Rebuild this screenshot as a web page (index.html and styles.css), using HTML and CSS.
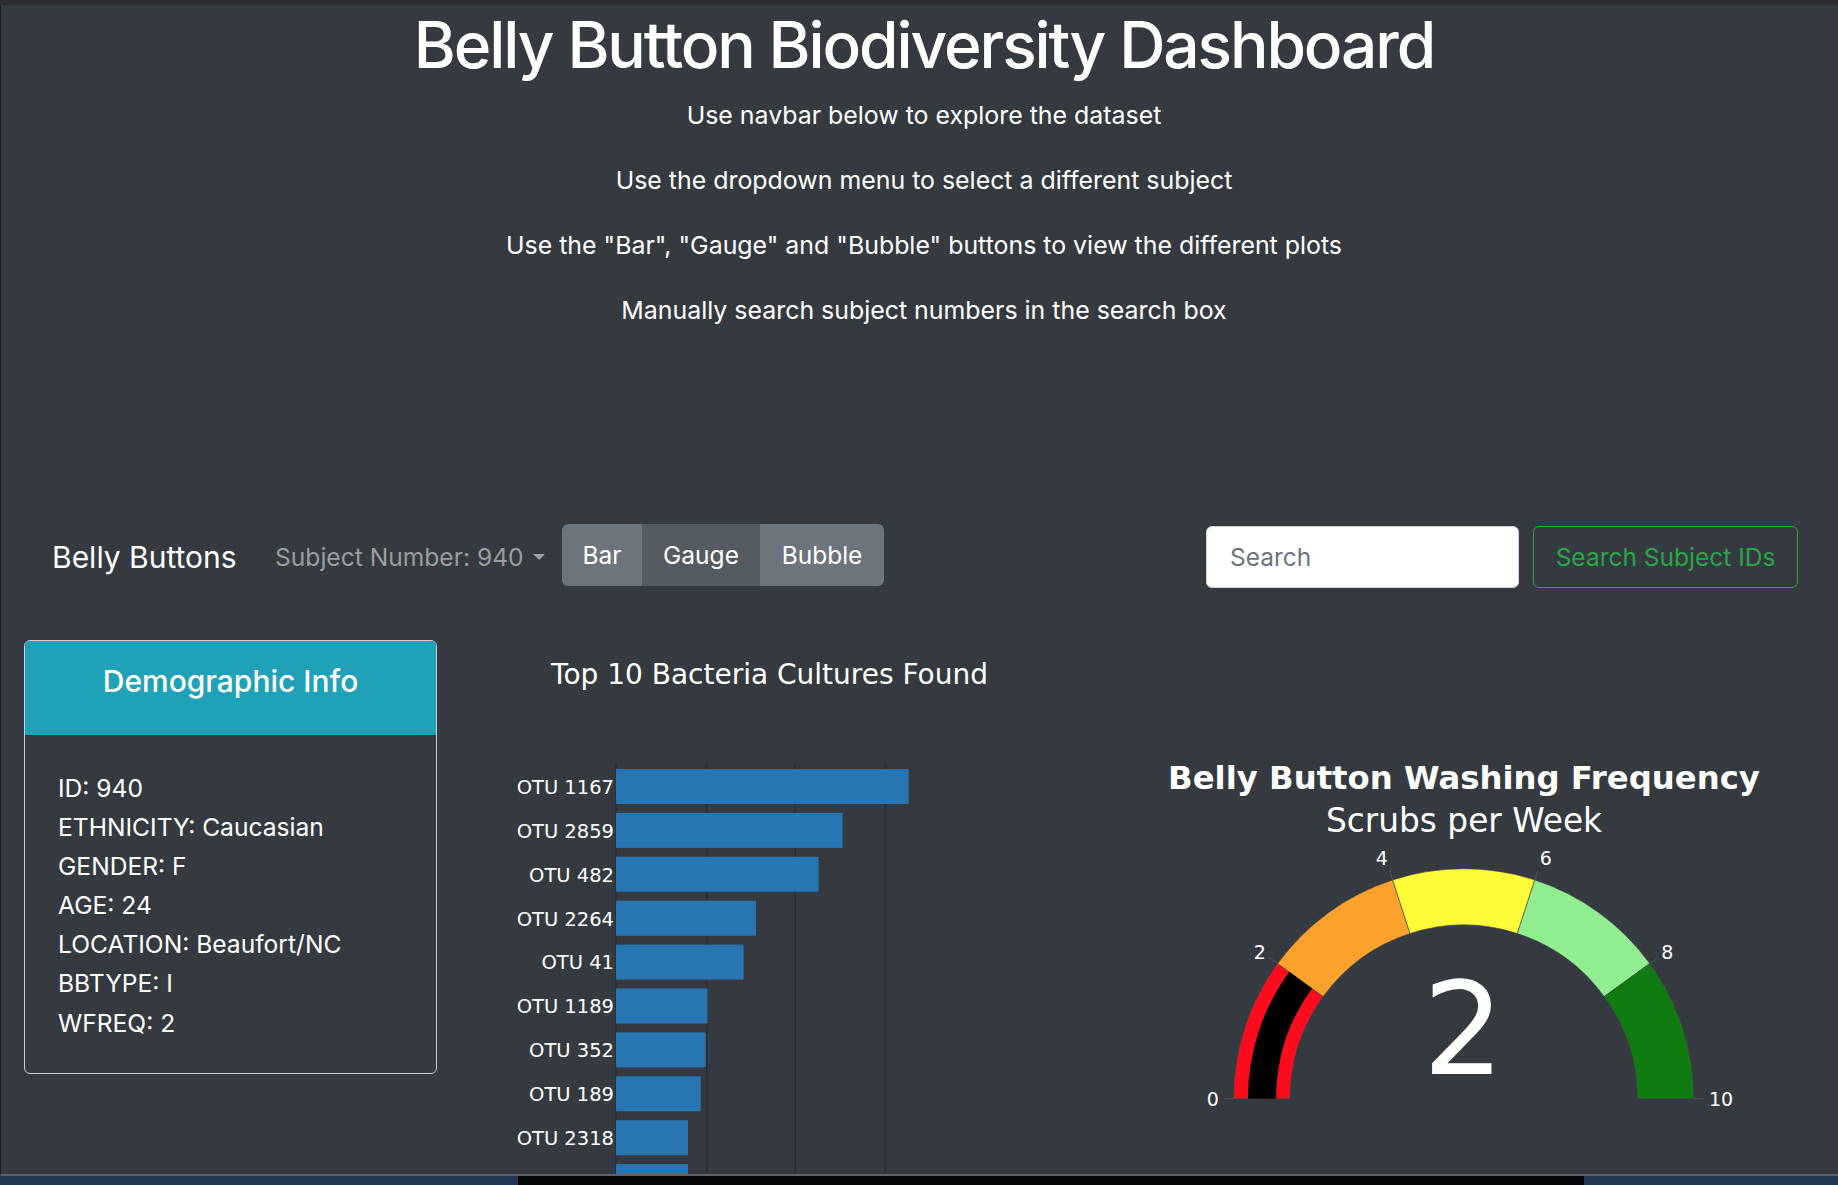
FILE: index.html
```html
<!DOCTYPE html>
<html lang="en">
<head>
<meta charset="utf-8">
<title>Belly Button Biodiversity Dashboard</title>
<link rel="stylesheet" href="styles.css">
</head>
<body>
<div class="topbar"></div>
<div class="window">
  <header class="intro">
    <h1 class="title">Belly Button Biodiversity Dashboard</h1>
    <p class="intro-line">Use navbar below to explore the dataset</p>
    <p class="intro-line">Use the dropdown menu to select a different subject</p>
    <p class="intro-line">Use the "Bar", "Gauge" and "Bubble" buttons to view the different plots</p>
    <p class="intro-line">Manually search subject numbers in the search box</p>
  </header>

  <nav class="navbar">
    <span class="brand">Belly Buttons</span>
    <div class="subject">Subject Number: 940<span class="caret"></span></div>
    <div class="btn-group">
      <button class="btn btn-bar">Bar</button>
      <button class="btn btn-gauge btn-active">Gauge</button>
      <button class="btn btn-bubble">Bubble</button>
    </div>
    <form class="search">
      <input class="search-input" type="text" placeholder="Search">
      <button class="btn-search" type="button">Search Subject IDs</button>
    </form>
  </nav>

  <main class="content">
    <section class="card">
      <div class="card-header">Demographic Info</div>
      <div class="card-body">
        <div>ID: 940</div>
        <div>ETHNICITY: Caucasian</div>
        <div>GENDER: F</div>
        <div>AGE: 24</div>
        <div>LOCATION: Beaufort/NC</div>
        <div>BBTYPE: I</div>
        <div>WFREQ: 2</div>
      </div>
    </section>

    <svg class="bar-chart" width="600" height="560" viewBox="0 0 600 560">
      <text class="chart-title" x="329.5" y="43.4" text-anchor="middle">Top 10 Bacteria Cultures Found</text>
      <g class="grid">
        <line x1="266.8" y1="123" x2="266.8" y2="560"/>
        <line x1="355.4" y1="123" x2="355.4" y2="560"/>
        <line x1="445.4" y1="123" x2="445.4" y2="560"/>
        <line x1="176" y1="123" x2="176" y2="560"/>
      </g>
      <g class="bars">
        <rect x="176" y="128" width="292.6" height="35"/>
        <rect x="176" y="171.9" width="226.5" height="35"/>
        <rect x="176" y="215.8" width="202.6" height="35"/>
        <rect x="176" y="259.7" width="140" height="35"/>
        <rect x="176" y="303.6" width="127.6" height="35"/>
        <rect x="176" y="347.5" width="91.5" height="35"/>
        <rect x="176" y="391.4" width="89.7" height="35"/>
        <rect x="176" y="435.3" width="84.7" height="35"/>
        <rect x="176" y="479.2" width="72" height="35"/>
        <rect x="176" y="523.1" width="72" height="35"/>
      </g>
      <g class="bar-labels" text-anchor="end">
        <text x="174" y="152.8">OTU 1167</text>
        <text x="174" y="196.7">OTU 2859</text>
        <text x="174" y="240.6">OTU 482</text>
        <text x="174" y="284.5">OTU 2264</text>
        <text x="174" y="328.4">OTU 41</text>
        <text x="174" y="372.3">OTU 1189</text>
        <text x="174" y="416.2">OTU 352</text>
        <text x="174" y="460.1">OTU 189</text>
        <text x="174" y="504">OTU 2318</text>
        <text x="174" y="547.9">OTU 1077</text>
      </g>
    </svg>

    <svg class="gauge" width="660" height="534" viewBox="0 0 660 534">
      <text class="gauge-title" x="324" y="148" text-anchor="middle">Belly Button Washing Frequency</text>
      <text class="gauge-sub" x="324" y="190.7" text-anchor="middle">Scrubs per Week</text>
      <g class="steps">
        <path fill="#ff0b1e" d="M93.7 457.7 A230 230 0 0 1 137.63 322.51 L183.17 355.6 A173.7 173.7 0 0 0 150 457.7 Z"/>
        <path fill="#fba22c" d="M137.63 322.51 A230 230 0 0 1 252.63 238.96 L270.02 292.5 A173.7 173.7 0 0 0 183.17 355.6 Z"/>
        <path fill="#fffb38" d="M252.63 238.96 A230 230 0 0 1 394.77 238.96 L377.38 292.5 A173.7 173.7 0 0 0 270.02 292.5 Z"/>
        <path fill="#90ee90" d="M394.77 238.96 A230 230 0 0 1 509.77 322.51 L464.23 355.6 A173.7 173.7 0 0 0 377.38 292.5 Z"/>
        <path fill="#107c10" d="M509.77 322.51 A230 230 0 0 1 553.7 457.7 L497.4 457.7 A173.7 173.7 0 0 0 464.23 355.6 Z"/>
      </g>
      <path class="value-bar" d="M107.9 457.7 A215.8 215.8 0 0 1 149.11 330.85 L172.01 347.49 A187.5 187.5 0 0 0 136.2 457.7 Z"/>
      <g class="ticks">
        <line x1="93.7" y1="457.7" x2="83.7" y2="457.7"/>
        <line x1="137.63" y1="322.51" x2="129.54" y2="316.63"/>
        <line x1="252.63" y1="238.96" x2="249.54" y2="229.45"/>
        <line x1="394.77" y1="238.96" x2="397.86" y2="229.45"/>
        <line x1="509.77" y1="322.51" x2="517.86" y2="316.63"/>
        <line x1="553.7" y1="457.7" x2="563.7" y2="457.7"/>
      </g>
      <g class="tick-labels" text-anchor="middle">
        <text x="72.7" y="465">0</text>
        <text x="119.8" y="318">2</text>
        <text x="241.9" y="224">4</text>
        <text x="405.7" y="224">6</text>
        <text x="527.4" y="318">8</text>
        <text x="581" y="465">10</text>
      </g>
      <text class="gauge-value" x="323.5" y="432.7" text-anchor="middle">2</text>
    </svg>
  </main>
</div>
<div class="desktop"><div class="desktop-dark"></div></div>
</body>
</html>
```

FILE: styles.css
```css
* { box-sizing: border-box; }

html, body {
  margin: 0;
  padding: 0;
}

body {
  height: 1185px;
  overflow: hidden;
  background: #2c2c2e;
  font-family: Inter, "Liberation Sans", sans-serif;
  color: #fff;
}

.topbar {
  height: 5px;
  background: #2d2d2f;
}

.window {
  height: 1171px;
  background: #343a40;
  border-left: 1px solid #1e1f21;
  border-bottom: 2px solid #5d6064;
  overflow: hidden;
}

.desktop {
  height: 9px;
  background: #223550;
  display: flex;
}

.desktop-dark {
  margin-left: 518px;
  width: 1066px;
  background: #060708;
}

/* intro */
.intro {
  display: flex;
  flex-direction: column;
  align-items: center;
  padding-left: 9px;
}

.title {
  margin: 0;
  font-size: 64px;
  font-weight: 500;
  letter-spacing: -2.1px;
  line-height: 80px;
}

.intro-line {
  margin: 29px 0 0;
  font-size: 24.9px;
  line-height: 36px;
}

.title + .intro-line {
  margin-top: 12px;
}

/* navbar */
.navbar {
  margin-top: 196px;
  height: 62px;
  display: flex;
  align-items: center;
  padding-left: 51px;
  padding-right: 40px;
}

.brand {
  width: 223px;
  font-size: 30px;
  white-space: nowrap;
  position: relative;
  top: 2px;
}

.subject {
  width: 287px;
  display: flex;
  align-items: center;
  font-size: 24.6px;
  color: #9a9da0;
  white-space: nowrap;
  position: relative;
  top: 2px;
}

.caret {
  margin-left: 9px;
  width: 0;
  height: 0;
  border-left: 6px solid transparent;
  border-right: 6px solid transparent;
  border-top: 6px solid #9a9da0;
}

.btn-group {
  display: flex;
  height: 62px;
  border-radius: 6px;
  overflow: hidden;
}

.btn {
  border: 0;
  margin: 0;
  background: #6c757d;
  color: #fff;
  font-family: inherit;
  font-size: 24.5px;
  padding: 0;
  height: 62px;
}

.btn-bar { width: 80px; }
.btn-gauge { width: 118px; }
.btn-bubble { width: 124px; }

.btn-active {
  background: #545b62;
}

.search {
  margin: 4px 0 0 auto;
  display: flex;
  gap: 14px;
  align-items: center;
}

.search-input {
  width: 313px;
  height: 62px;
  border: 1px solid #ced4da;
  border-radius: 6px;
  padding: 0 23px;
  font-family: inherit;
  font-size: 24.5px;
  color: #495057;
  background: #fff;
}

.search-input::placeholder {
  color: #6c757d;
}

.btn-search {
  width: 265px;
  height: 62px;
  border: 1.5px solid #28a745;
  border-radius: 6px;
  background: transparent;
  color: #28a745;
  font-family: inherit;
  font-size: 24.5px;
  padding: 0;
}

/* content */
.content {
  margin-top: 52px;
  display: flex;
  align-items: flex-start;
  padding-left: 23px;
}

.card {
  width: 413px;
  height: 434px;
  border: 1px solid #c9cdd1;
  border-radius: 6px;
  overflow: hidden;
  flex: none;
  margin-top: 2px;
}

.card-header {
  height: 94px;
  padding-top: 22px;
  background: #1fa2b8;
  text-align: center;
  font-size: 30px;
  font-weight: 500;
  line-height: 36px;
}

.card-body {
  padding: 34px 0 0 33px;
  font-size: 24.6px;
  line-height: 39.1px;
}

.bar-chart {
  flex: none;
  margin-left: 3px;
  margin-top: 3px;
  font-family: "DejaVu Sans", Verdana, sans-serif;
}

.chart-title {
  fill: #fff;
  font-size: 28px;
}

.grid line {
  stroke: #2a2e33;
  stroke-width: 1.5;
}

.bars rect {
  fill: #2776b1;
}

.bar-labels text {
  fill: #fff;
  font-size: 19.5px;
}

.gauge {
  flex: none;
  margin-left: 100px;
  margin-top: 3px;
  font-family: "DejaVu Sans", Verdana, sans-serif;
}

.gauge-title {
  fill: #fff;
  font-size: 32.3px;
  font-weight: bold;
}

.gauge-sub {
  fill: #fff;
  font-size: 32.8px;
}

.steps path {
  stroke: #444;
  stroke-width: 0.6;
}

.value-bar {
  fill: #000;
}

.ticks line {
  stroke: #555;
  stroke-width: 1;
}

.tick-labels text {
  fill: #fff;
  font-size: 19px;
}

.gauge-value {
  fill: #fff;
  font-size: 128px;
}
```
